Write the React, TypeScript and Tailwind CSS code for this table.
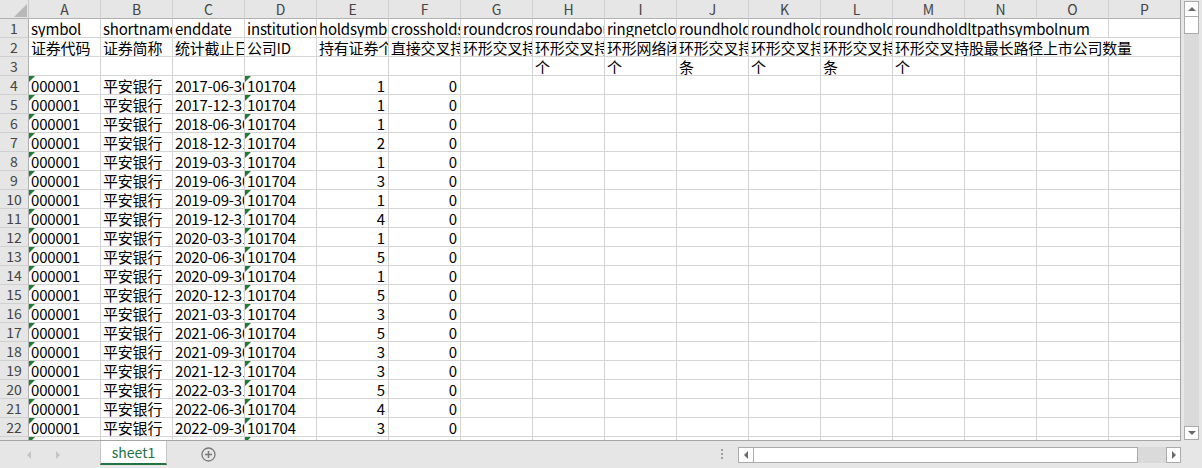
import React from 'react';

type CellData = {
  text?: string;
  right?: boolean;
  flag?: boolean;
  span?: 1 | 3 | 4;
};

const COLS = ['A', 'B', 'C', 'D', 'E', 'F', 'G', 'H', 'I', 'J', 'K', 'L', 'M', 'N', 'O', 'P'];

const spanWidth: Record<number, string> = {
  1: 'w-[72px]',
  3: 'w-[216px]',
  4: 'w-[288px]',
};

const dates = [
  '2017-06-30', '2017-12-31', '2018-06-30', '2018-12-31', '2019-03-31', '2019-06-30',
  '2019-09-30', '2019-12-31', '2020-03-31', '2020-06-30', '2020-09-30', '2020-12-31',
  '2021-03-31', '2021-06-30', '2021-09-30', '2021-12-31', '2022-03-31', '2022-06-30',
  '2022-09-30', '2022-12-31',
];
const holds = [1, 1, 1, 2, 1, 3, 1, 4, 1, 5, 1, 5, 3, 5, 3, 3, 5, 4, 3, 3];

const headerRows: CellData[][] = [
  [
    { text: 'symbol' }, { text: 'shortname' }, { text: 'enddate' }, { text: 'institutionid' },
    { text: 'holdsymbolnum' }, { text: 'crossholdsymbolnum' }, { text: 'roundcrossholdnum' },
    { text: 'roundaboutnum' }, { text: 'ringnetclosednum' }, { text: 'roundholdsnum' },
    { text: 'roundholdsymbolnum' }, { text: 'roundholdltpathnum' },
    { text: 'roundholdltpathsymbolnum', span: 3 }, {},
  ],
  [
    { text: '证券代码' }, { text: '证券简称' }, { text: '统计截止日期' }, { text: '公司ID' },
    { text: '持有证券个数' }, { text: '直接交叉持股数量' }, { text: '环形交叉持股数量' },
    { text: '环形交叉持股数量' }, { text: '环形网络闭合数量' }, { text: '环形交叉持股路径' },
    { text: '环形交叉持股公司' }, { text: '环形交叉持股最长' },
    { text: '环形交叉持股最长路径上市公司数量', span: 4 },
  ],
  [
    {}, {}, {}, {}, {}, {}, {},
    { text: '个' }, { text: '个' }, { text: '条' }, { text: '个' }, { text: '条' }, { text: '个' },
    {}, {}, {},
  ],
];

const dataRows: CellData[][] = dates.map((d, i) => {
  const row: CellData[] = [
    { text: '000001', flag: true },
    { text: '平安银行' },
    { text: d },
    { text: '101704', flag: true },
    { text: String(holds[i]), right: true },
    { text: '0', right: true },
  ];
  for (let c = 6; c < 16; c++) row.push({});
  return row;
});

const allRows = [...headerRows, ...dataRows];

function GreenFlag() {
  return (
    <svg className="absolute left-0 top-0" width="6" height="6" viewBox="0 0 6 6">
      <polygon points="0,0 6,0 0,6" fill="#1e7b34" />
    </svg>
  );
}

function Cell({ cell }: { cell: CellData }) {
  const span = cell.span ?? 1;
  return (
    <div
      className={`relative shrink-0 h-[19px] border-r border-b border-[#d4d4d4] overflow-hidden whitespace-nowrap leading-[19px] text-[15px] tracking-[-0.2px] text-black ${spanWidth[span]} ${
        cell.right ? 'text-right pr-[3px]' : 'pl-[2px]'
      }`}
    >
      {cell.flag && <GreenFlag />}
      {cell.text}
    </div>
  );
}

function Sheet() {
  return (
    <div className="w-[1181px] h-[441px] overflow-hidden border-r border-b border-[#a6a6a6] bg-white">
      <div className="w-[1181px]">
        {/* column letters */}
        <div className="flex h-[19px]">
          <div className="relative w-[29px] shrink-0 h-[19px] bg-[#e6e6e6] border-r border-r-[#c8c8c8] border-b border-b-[#b0b0b0]">
            <svg className="absolute right-[1px] bottom-[1px]" width="13" height="13" viewBox="0 0 13 13">
              <polygon points="13,0 13,13 0,13" fill="#b8b8b8" />
            </svg>
          </div>
          {COLS.map((c) => (
            <div
              key={c}
              className="w-[72px] shrink-0 h-[19px] bg-[#e6e6e6] border-r border-r-[#d0d0d0] border-b border-b-[#b0b0b0] text-center leading-[18px] text-[14px] text-[#444]"
            >
              {c}
            </div>
          ))}
        </div>
        {allRows.map((row, r) => (
          <div key={r} className="flex h-[19px]">
            <div className="w-[29px] shrink-0 h-[19px] bg-[#e6e6e6] border-r border-r-[#b0b0b0] border-b border-b-[#d0d0d0] text-center leading-[18px] text-[14px] text-[#444]">
              {r + 1}
            </div>
            {row.map((cell, i) => (
              <Cell key={i} cell={cell} />
            ))}
          </div>
        ))}
      </div>
    </div>
  );
}

function VScroll() {
  return (
    <div className="w-[21px] h-[441px] bg-[#e6e6e6] flex">
      <div className="ml-[3px] w-[15px] flex flex-col pt-[1px] pb-[1px]">
        <div className="h-[16px] border border-[#ababab] bg-white flex items-center justify-center">
          <svg width="8" height="4" viewBox="0 0 8 4">
            <polygon points="0,4 8,4 4,0" fill="#6b6b6b" />
          </svg>
        </div>
        <div className="h-[17px] border-x border-b border-[#ababab] bg-white" />
        <div className="flex-1 bg-[#dadada]" />
        <div className="h-[14px] border border-[#ababab] bg-white flex items-center justify-center">
          <svg width="8" height="4" viewBox="0 0 8 4">
            <polygon points="0,0 8,0 4,4" fill="#6b6b6b" />
          </svg>
        </div>
      </div>
    </div>
  );
}

function BottomBar() {
  return (
    <div className="flex h-[27px] bg-[#e6e6e6]">
      <div className="w-[100px] shrink-0 flex items-center">
        <svg className="ml-[27px]" width="4" height="8" viewBox="0 0 4 8">
          <polygon points="4,0 4,8 0,4" fill="#c4c4c4" />
        </svg>
        <svg className="ml-[25px]" width="4" height="8" viewBox="0 0 4 8">
          <polygon points="0,0 0,8 4,4" fill="#c4c4c4" />
        </svg>
      </div>
      <div className="w-[67px] shrink-0 h-[24px] bg-white border-x border-[#c6c6c6] border-b-2 border-b-[#217346] flex items-center justify-center text-[14px] text-[#217346]">
        sheet1
      </div>
      <div className="w-[34px] shrink-0" />
      <div className="w-[15px] shrink-0 flex items-center">
        <svg width="15" height="15" viewBox="0 0 15 15">
          <circle cx="7.5" cy="7.5" r="6.5" fill="none" stroke="#7a7a7a" strokeWidth="1.3" />
          <path d="M7.5 4v7M4 7.5h7" stroke="#7a7a7a" strokeWidth="1.5" />
        </svg>
      </div>
      <div className="w-[505px] shrink-0" />
      <div className="w-[17px] shrink-0 flex flex-col pt-[8px] gap-[2px]">
        <div className="w-[2px] h-[2px] bg-[#a0a0a0]" />
        <div className="w-[2px] h-[2px] bg-[#a0a0a0]" />
        <div className="w-[2px] h-[2px] bg-[#a0a0a0]" />
      </div>
      <div className="w-[443px] shrink-0 h-[16px] mt-[6px] flex">
        <div className="w-[16px] border border-[#ababab] bg-white flex items-center justify-center">
          <svg width="4" height="8" viewBox="0 0 4 8">
            <polygon points="4,0 4,8 0,4" fill="#6b6b6b" />
          </svg>
        </div>
        <div className="w-[384px] border-y border-r border-[#ababab] bg-white" />
        <div className="flex-1 bg-[#dadada]" />
        <div className="w-[15px] border border-[#ababab] bg-white flex items-center justify-center">
          <svg width="4" height="8" viewBox="0 0 4 8">
            <polygon points="0,0 0,8 4,4" fill="#6b6b6b" />
          </svg>
        </div>
      </div>
    </div>
  );
}

export default function App() {
  return (
    <div className="w-[1202px] h-[468px] overflow-hidden bg-[#e6e6e6] font-['Noto_Sans_CJK_SC','Noto_Sans',sans-serif]">
      <div className="flex">
        <Sheet />
        <VScroll />
      </div>
      <BottomBar />
    </div>
  );
}
